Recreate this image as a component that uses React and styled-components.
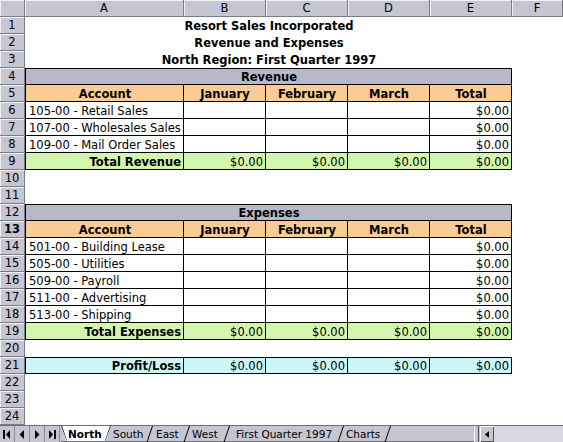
import React from "react";
import styled, { createGlobalStyle, css } from "styled-components";

const Global = createGlobalStyle`
  html, body { margin: 0; padding: 0; background: #fff; overflow: hidden; }
  body { font-family: "DejaVu Sans", Tahoma, sans-serif; }
`;

const HEAD_BG = "#c6c5d2";
const BAND_BG = "#b9b8c9";
const ORANGE = "#f9cb97";
const GREEN = "#d4f5b0";
const CYAN = "#cbf7f7";

const Window = styled.div`
  width: 563px;
  height: 442px;
  display: flex;
  flex-direction: column;
  overflow: hidden;
  font-size: 11.5px;
  color: #000;
`;

const Sheet = styled.div`
  display: grid;
  grid-template-columns: 25px 159px 82px 82px 82px 82px 1fr;
  grid-auto-rows: 17px;
  flex: none;
`;

const raised = css`
  background: ${HEAD_BG};
  box-shadow: inset 1px 1px 0 #f2f2f6;
  border-right: 1px solid #7c7c88;
  border-bottom: 1px solid #7c7c88;
  box-sizing: border-box;
`;

const Corner = styled.div`
  ${raised};
`;

const ColHead = styled.div`
  ${raised};
  display: flex;
  align-items: center;
  justify-content: center;
  font-size: 11.5px;
`;

const RowHead = styled.div`
  ${raised};
  display: flex;
  align-items: center;
  justify-content: center;
  font-size: 11.5px;
  font-weight: ${(p) => (p.$active ? 700 : 400)};
`;

const Cell = styled.div`
  box-sizing: border-box;
  display: flex;
  align-items: center;
  padding: 1px 2px 0 3px;
  white-space: nowrap;
  overflow: visible;
  background: ${(p) => p.$bg || "#fff"};
  justify-content: ${(p) =>
    p.$align === "right" ? "flex-end" : p.$align === "center" ? "center" : "flex-start"};
  font-weight: ${(p) => (p.$bold ? 700 : 400)};
  grid-column: ${(p) => (p.$span ? `span ${p.$span}` : "auto")};
  ${(p) =>
    p.$boxed &&
    css`
      border-right: 1px solid #000;
      border-bottom: 1px solid #000;
    `}
  ${(p) => p.$bl && css`border-left: 1px solid #000;`}
  ${(p) => p.$bt && css`border-top: 1px solid #000;`}
`;

const Spacer = styled.div`
  background: #fff;
`;

const TabBar = styled.div`
  height: 17px;
  flex: none;
  display: flex;
  align-items: stretch;
  background: ${HEAD_BG};
  border-top: 1px solid #6e6e78;
  box-sizing: border-box;
  font-size: 10px;
`;

const NavGroup = styled.div`
  display: flex;
  width: 61px;
  flex: none;
`;

const NavButton = styled.div`
  width: 15px;
  display: flex;
  align-items: center;
  justify-content: center;
  border-right: 1px solid #8a8a96;
  box-sizing: border-box;
`;

const Tabs = styled.div`
  display: flex;
  align-items: stretch;
  width: 413px;
  flex: none;
  border-bottom: 1px solid #6e6e78;
  box-sizing: border-box;
`;

const Tab = styled.div`
  position: relative;
  display: flex;
  align-items: center;
  box-sizing: border-box;
  width: ${(p) => p.$w}px;
  flex: none;
  padding-left: ${(p) => p.$pl}px;
  background: ${(p) => (p.$active ? "#fff" : "transparent")};
  font-weight: ${(p) => (p.$active ? 700 : 400)};
  font-size: ${(p) => (p.$active ? "10.5px" : "10.5px")};
  clip-path: ${(p) =>
    p.$active ? "polygon(0 0, 100% 0, calc(100% - 6px) 100%, 6px 100%)" : "none"};
  white-space: nowrap;
`;

const Edge = styled.svg`
  position: absolute;
  top: 0;
  ${(p) => (p.$side === "left" ? "left: 0;" : "right: 0;")}
  width: 7px;
  height: 16px;
`;

const SplitBox = styled.div`
  width: 3px;
  flex: none;
  background: ${HEAD_BG};
  border-left: 1px solid #fff;
  border-right: 1px solid #505058;
  margin-right: 1px;
`;

const ScrollBtn = styled.div`
  width: 14px;
  flex: none;
  display: flex;
  align-items: center;
  justify-content: center;
  background: ${HEAD_BG};
  box-shadow: inset 1px 1px 0 #fff, inset -1px -1px 0 #505058;
`;

const Track = styled.div`
  flex: 1;
  background: #d8d8e2;
`;

const Tri = ({ dir, bar }) => (
  <svg width="8" height="9" viewBox="0 0 8 9">
    {dir === "left" ? (
      <>
        {bar && <rect x="0" y="0" width="2" height="9" fill="#000" />}
        <polygon points={bar ? "7,0 7,9 3,4.5" : "6,0 6,9 1.5,4.5"} fill="#000" />
      </>
    ) : (
      <>
        {bar && <rect x="6" y="0" width="2" height="9" fill="#000" />}
        <polygon points={bar ? "1,0 1,9 5,4.5" : "2,0 2,9 6.5,4.5"} fill="#000" />
      </>
    )}
  </svg>
);

const money = "$0.00";

const revenueRows = [
  "105-00 - Retail Sales",
  "107-00 - Wholesales Sales",
  "109-00 - Mail Order Sales",
];
const expenseRows = [
  "501-00 - Building Lease",
  "505-00 - Utilities",
  "509-00 - Payroll",
  "511-00 - Advertising",
  "513-00 - Shipping",
];

const rows = [
  { type: "title", text: "Resort Sales Incorporated" },
  { type: "title", text: "Revenue and Expenses" },
  { type: "title", text: "North Region: First Quarter 1997" },
  { type: "band", text: "Revenue" },
  { type: "head" },
  ...revenueRows.map((t) => ({ type: "data", text: t })),
  { type: "total", text: "Total Revenue", bg: GREEN },
  { type: "empty" },
  { type: "empty" },
  { type: "band", text: "Expenses" },
  { type: "head", active: true },
  ...expenseRows.map((t) => ({ type: "data", text: t })),
  { type: "total", text: "Total Expenses", bg: GREEN },
  { type: "empty" },
  { type: "total", text: "Profit/Loss", bg: CYAN, top: true },
  { type: "empty" },
  { type: "empty" },
  { type: "empty" },
];

const heads = ["Account", "January", "February", "March", "Total"];

function renderRow(r, i) {
  const n = i + 1;
  const out = [
    <RowHead key={`h${n}`} $active={r.active}>
      {n}
    </RowHead>,
  ];
  if (r.type === "title") {
    out.push(
      <Cell key={`c${n}`} $span={5} $align="center" $bold>
        {r.text}
      </Cell>
    );
  } else if (r.type === "band") {
    out.push(
      <Cell key={`c${n}`} $span={5} $align="center" $bold $bg={BAND_BG} $boxed $bl $bt>
        {r.text}
      </Cell>
    );
  } else if (r.type === "head") {
    heads.forEach((h, j) =>
      out.push(
        <Cell key={`c${n}-${j}`} $align="center" $bold $bg={ORANGE} $boxed $bl={j === 0}>
          {h}
        </Cell>
      )
    );
  } else if (r.type === "data") {
    out.push(
      <Cell key={`c${n}-0`} $boxed $bl>
        {r.text}
      </Cell>
    );
    [1, 2, 3].forEach((j) => out.push(<Cell key={`c${n}-${j}`} $boxed />));
    out.push(
      <Cell key={`c${n}-4`} $boxed $align="right">
        {money}
      </Cell>
    );
  } else if (r.type === "total") {
    out.push(
      <Cell key={`c${n}-0`} $boxed $bl $bt={r.top} $align="right" $bold $bg={r.bg}>
        {r.text}
      </Cell>
    );
    [1, 2, 3, 4].forEach((j) =>
      out.push(
        <Cell key={`c${n}-${j}`} $boxed $bt={r.top} $align="right" $bg={r.bg}>
          {money}
        </Cell>
      )
    );
  } else {
    out.push(<Cell key={`c${n}`} $span={5} />);
  }
  out.push(<Spacer key={`f${n}`} />);
  return out;
}

const sheetTabs = [
  { name: "North", active: true, w: 50, pl: 7 },
  { name: "South", w: 42, pl: 2 },
  { name: "East", w: 37, pl: 3 },
  { name: "West", w: 40, pl: 2 },
  { name: "First Quarter 1997", w: 114, pl: 6 },
  { name: "Charts", w: 47, pl: 2 },
];

export default function App() {
  return (
    <Window>
      <Global />
      <Sheet>
        <Corner />
        {["A", "B", "C", "D", "E", "F"].map((c) => (
          <ColHead key={c}>{c}</ColHead>
        ))}
        {rows.map(renderRow)}
      </Sheet>
      <TabBar>
        <NavGroup>
          <NavButton>
            <Tri dir="left" bar />
          </NavButton>
          <NavButton>
            <Tri dir="left" />
          </NavButton>
          <NavButton>
            <Tri dir="right" />
          </NavButton>
          <NavButton>
            <Tri dir="right" bar />
          </NavButton>
        </NavGroup>
        <Tabs>
          {sheetTabs.map((t) => (
            <Tab key={t.name} $active={t.active} $w={t.w} $pl={t.pl}>
              {t.active && (
                <Edge $side="left" viewBox="0 0 7 16">
                  <line x1="0.5" y1="0" x2="6" y2="16" stroke="#000" strokeWidth="1" />
                </Edge>
              )}
              {t.name}
              <Edge $side="right" viewBox="0 0 7 16">
                <line x1="1" y1="16" x2="6.5" y2="0" stroke="#000" strokeWidth="1" />
              </Edge>
            </Tab>
          ))}
        </Tabs>
        <SplitBox />
        <ScrollBtn>
          <svg width="4" height="7" viewBox="0 0 4 7">
            <polygon points="4,0 4,7 0,3.5" fill="#000" />
          </svg>
        </ScrollBtn>
        <Track />
      </TabBar>
    </Window>
  );
}
